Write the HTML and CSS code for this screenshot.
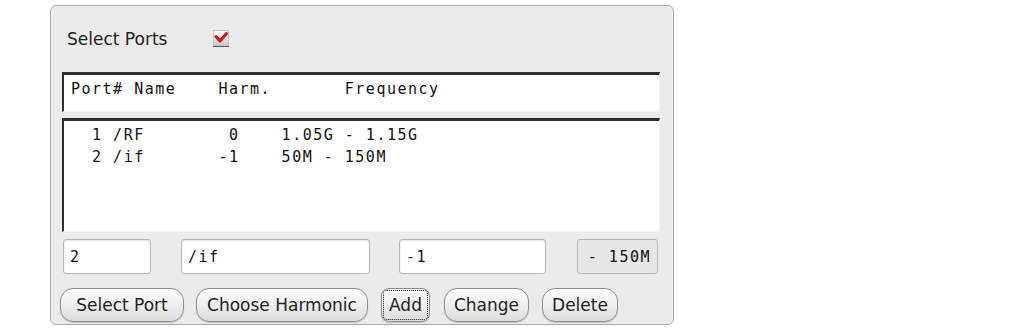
FILE: index.html
```html
<!DOCTYPE html>
<html lang="en">
<head>
  <meta charset="UTF-8">
  <link rel="stylesheet" href="styles.css">
</head>
<body>
  <div class="panel">
    <div class="title">
      <span class="title-label">Select Ports</span>
      <svg class="check" width="16" height="17" viewBox="0 0 16 17">
        <defs>
          <linearGradient id="cbg" x1="0" y1="0" x2="0" y2="1">
            <stop offset="0" stop-color="#ffffff"/>
            <stop offset="1" stop-color="#c9c9c9"/>
          </linearGradient>
        </defs>
        <rect x="0.5" y="0.5" width="15" height="15" fill="url(#cbg)" stroke="#c4c4c4"/>
        <line x1="0" y1="16.5" x2="16" y2="16.5" stroke="#5a5a5a"/>
        <path d="M3 6.5 L7 11 L13.5 3.5" stroke="#d4101c" stroke-width="3" fill="none" stroke-linecap="round" stroke-linejoin="round"/>
      </svg>
    </div>

    <div class="header-box mono"><span class="pre">Port# Name    Harm.       Frequency</span></div>

    <div class="list mono">
      <div class="row pre">  1 /RF        0    1.05G - 1.15G</div>
      <div class="row pre">  2 /if       -1    50M - 150M</div>
    </div>

    <div class="fields">
      <div class="field mono f-port">2</div>
      <div class="field mono f-name">/if</div>
      <div class="field mono f-harm">-1</div>
      <div class="field mono f-freq disabled">- 150M</div>
    </div>

    <div class="buttons">
      <div class="btn b-select">Select Port</div>
      <div class="btn b-harm">Choose Harmonic</div>
      <div class="btn b-add"><span class="focus">Add</span></div>
      <div class="btn b-change">Change</div>
      <div class="btn b-delete">Delete</div>
    </div>
  </div>
</body>
</html>
```

FILE: styles.css
```css
body {
  margin: 0;
  background-color: #fff;
  font-family: "DejaVu Sans", sans-serif;
  color: #1a1a1a;
}

.panel {
  box-sizing: border-box;
  margin: 5px 0 0 50px;
  width: 624px;
  height: 320px;
  padding: 0 13px 0 11px;
  border: 1px solid #ababab;
  border-radius: 6px;
  background-color: #ebebeb;
}

.mono {
  font-family: "DejaVu Sans Mono", monospace;
  font-size: 15px;
  letter-spacing: 1.5px;
  color: #111;
}

.pre {
  white-space: pre;
}

.title {
  display: flex;
  align-items: center;
  height: 66px;
}

.title-label {
  width: 146px;
  margin-left: 5px;
  font-size: 17px;
  color: #222;
}

.check {
  display: block;
  margin-top: -2px;
}

.header-box,
.list {
  box-sizing: border-box;
  background-color: #fff;
  border-top: 3px solid #2e2e2e;
  border-left: 2px solid #2e2e2e;
  border-right: 1px solid #f6f6f6;
  border-bottom: 1px solid #f6f6f6;
  padding-left: 7px;
}

.header-box {
  height: 40px;
  padding-top: 5px;
  line-height: 18px;
}

.list {
  margin-top: 6px;
  height: 114px;
  padding-top: 3px;
}

.row {
  line-height: 22px;
}

.fields {
  display: flex;
  margin-top: 7px;
  height: 35px;
}

.field {
  box-sizing: border-box;
  display: flex;
  align-items: center;
  height: 35px;
  padding: 0 6px;
  border: 1px solid #b8b8b8;
  border-radius: 3px;
  background-color: #fff;
  box-shadow: inset 0 1px 2px rgba(0,0,0,0.12);
  white-space: pre;
}

.f-port { width: 88px; margin-left: 1px; }
.f-name { width: 189px; margin-left: 30px; }
.f-harm { width: 147px; margin-left: 29px; }
.f-freq { width: 81px; margin-left: 31px; justify-content: flex-end; }

.field.disabled {
  background-color: #e7e7e7;
  box-shadow: none;
}

.buttons {
  display: flex;
  margin-top: 14px;
  margin-left: -2px;
}

.btn {
  box-sizing: border-box;
  display: flex;
  align-items: center;
  justify-content: center;
  height: 34px;
  border: 1px solid #8e8e8e;
  border-radius: 13px;
  background: linear-gradient(#fefefe, #f0f0f0 45%, #dcdcdc);
  box-shadow: 0 1px 1px rgba(0,0,0,0.15);
  font-size: 17px;
  color: #222;
}

.b-select { width: 124px; }
.b-harm { width: 172px; margin-left: 12px; }
.b-add { width: 49px; margin-left: 13px; border-radius: 8px; }
.b-change { width: 85px; margin-left: 14px; }
.b-delete { width: 76px; margin-left: 13px; }

.focus {
  box-sizing: border-box;
  display: flex;
  align-items: center;
  justify-content: center;
  width: 45px;
  height: 30px;
  border: 1px dotted #222;
  border-radius: 4px;
}
```
